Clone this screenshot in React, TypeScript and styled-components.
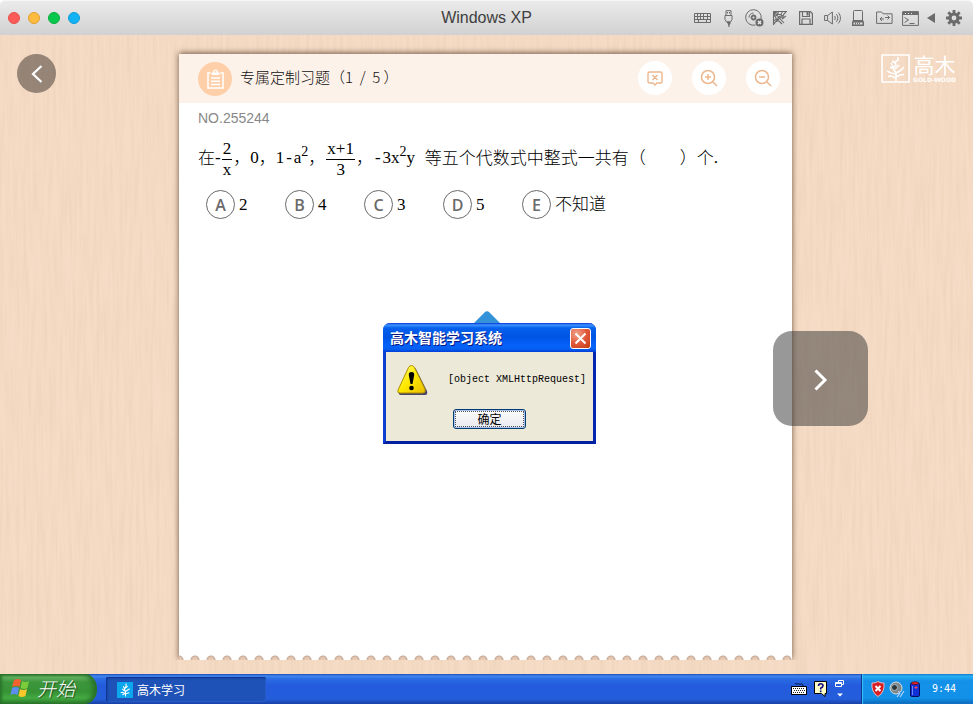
import React from "react";
import styled, { createGlobalStyle } from "styled-components";

const CJK = '"Noto Sans CJK SC", sans-serif';

const GlobalStyle = createGlobalStyle`
  *, *::before, *::after { box-sizing: border-box; }
  body { margin: 0; background: #fff; font-family: "Liberation Sans", ${CJK}; }
  button { font: inherit; padding: 0; border: 0; background: none; color: inherit; cursor: pointer; }
  svg { display: block; flex: none; }
`;

const Window = styled.div`
  display: grid;
  grid-template-rows: 35px 1fr 30px;
  min-height: 100vh;
`;

/* ---------- title bar ---------- */

const TitleBar = styled.header`
  display: grid;
  grid-template-columns: 1fr auto 1fr;
  align-items: center;
  border-radius: 5px 5px 0 0;
  border-top: 1px solid #f6f6f6;
  background: linear-gradient(#ebebeb, #d1d1d1);
`;

const Lights = styled.div`
  display: flex;
  gap: 8px;
  padding-left: 8px;
`;

const Light = styled.button<{ $fill: string; $ring: string }>`
  width: 12px;
  height: 12px;
  border-radius: 50%;
  border: 1px solid ${(p) => p.$ring};
  background: ${(p) => p.$fill};
`;

const WindowTitle = styled.h1`
  margin: 0;
  font: 400 16px/20px "Liberation Sans", sans-serif;
  color: #404040;
`;

const Tools = styled.div`
  display: flex;
  justify-content: flex-end;
  padding-right: 4px;
  color: #6b6b6b;
`;

const Tool = styled.button<{ $width?: number }>`
  display: grid;
  place-items: center;
  width: ${(p) => p.$width ?? 26}px;
  height: 20px;
`;

/* ---------- desktop ---------- */

const Desktop = styled.main`
  position: relative;
  display: grid;
  grid-template-columns: 179px 1fr 181px;
  padding: 19px 0 14px;
  background: #f6dcc6;
  isolation: isolate;
  overflow: hidden;
`;

const Grain = styled.svg`
  position: absolute;
  inset: 0;
  width: 100%;
  height: 100%;
  z-index: -1;
`;

const BackButton = styled.button`
  display: grid;
  place-items: center;
  width: 39px;
  height: 39px;
  margin-left: 17px;
  border-radius: 50%;
  background: rgba(72, 64, 56, 0.55);
`;

const Brand = styled.div`
  display: flex;
  justify-self: end;
  align-self: start;
  gap: 3px;
  padding-right: 17px;
  color: #fff;
`;

const BrandWords = styled.div`
  display: flex;
  flex-direction: column;
  align-items: center;
  gap: 2px;
`;

const BrandName = styled.span`
  font: 400 21px/20px ${CJK};
`;

const BrandSub = styled.span`
  font: 700 6px/7px "DejaVu Sans", sans-serif;
`;

const NextButton = styled.button`
  position: absolute;
  top: 296px;
  right: 105px;
  display: grid;
  place-items: center;
  width: 95px;
  height: 95px;
  padding-top: 3px;
  border-radius: 19px;
  background: rgba(50, 50, 50, 0.5);
`;

/* ---------- paper ---------- */

const Paper = styled.section`
  display: grid;
  grid-template-rows: 49px 1fr 5px;
  box-shadow: 0 -1px 6px rgba(80, 55, 35, 0.8);
  clip-path: inset(-12px -12px 0);
`;

const PaperHead = styled.header`
  display: flex;
  align-items: center;
  padding: 0 12px 0 19px;
  background: #fdf2e9;
`;

const HeadBadge = styled.span`
  display: grid;
  place-items: center;
  width: 34px;
  height: 34px;
  border-radius: 50%;
  background: #fecfa8;
`;

const HeadTitle = styled.h2`
  display: flex;
  margin: 0 auto 0 8px;
  padding-bottom: 3px;
  font: 300 15px/22px ${CJK};
  color: #111;
  white-space: pre;
`;

const HeadActions = styled.div`
  display: flex;
  gap: 20px;
  padding-bottom: 1px;
  color: #ecb78e;
`;

const RoundButton = styled.button`
  display: grid;
  place-items: center;
  width: 34px;
  height: 34px;
  border-radius: 50%;
  background: #fff;
`;

const PaperBody = styled.div`
  padding: 0 19px;
  background: #fff;
`;

const PaperTear = styled.div`
  background: radial-gradient(circle 5px at 8px 100%, #ecd0ba 0, #e0c2ac 3px, #c4a995 4px, #fff 5px) -8px 0 / 16px 5px;
`;

const Serial = styled.p`
  margin: 0;
  font-size: 14px;
  line-height: 30px;
  color: #888;
`;

const Question = styled.p`
  display: flex;
  align-items: center;
  margin: 0;
  height: 50px;
  font: 400 17px/20px "Liberation Serif", ${CJK};
  color: #000;
  white-space: pre;
`;

const Han = styled.span`
  padding-bottom: 2px;
  font: 300 17px/20px ${CJK};
`;

const Minus = styled.span`
  font: 400 16px/20px "Liberation Mono", monospace;
`;

const Power = styled.sup`
  font-size: 14px;
  line-height: 1px;
`;

const Fraction = styled.span`
  display: inline-flex;
  flex-direction: column;
  align-items: center;
  margin: 0 1px;
  padding-top: 3px;

  & > span:first-child {
    padding: 0 1px;
    border-bottom: 1px solid #000;
  }
`;

const Options = styled.div`
  display: grid;
  grid-template-columns: repeat(4, 79px) auto;
  justify-content: start;
  margin-top: 7px;
  padding-left: 8px;
`;

const Option = styled.button`
  display: flex;
  align-items: center;
  gap: 4px;
  font: 300 17px/20px "Liberation Serif", ${CJK};
  color: #000;
`;

const Letter = styled.span`
  display: grid;
  place-items: center;
  width: 29px;
  height: 29px;
  border: 1px solid #6a6a6a;
  border-radius: 50%;
  font: 600 16px/20px "Open Sans", sans-serif;
  color: #6a6a6a;
`;

/* ---------- alert ---------- */

const AlertLayer = styled.div`
  position: absolute;
  inset: 0;
  display: grid;
  place-items: center;
  padding: 45px 0 0 6px;
  pointer-events: none;
`;

const AlertStack = styled.div`
  display: grid;
  pointer-events: auto;
`;

const Pointer = styled.svg`
  margin-left: 91px;
`;

const Alert = styled.section`
  width: 213px;
  border: 3px solid #0a3fd0;
  border-top: 0;
  border-right-color: #0426ae;
  border-bottom-color: #0220a0;
  border-radius: 7px 7px 0 0;
  background: #ece9d8;
`;

const AlertBar = styled.header`
  display: flex;
  align-items: center;
  justify-content: space-between;
  height: 29px;
  margin: 0 -3px;
  padding: 2px 5px 0 7px;
  border-radius: 7px 7px 0 0;
  background: linear-gradient(#0831d9 0, #3d95ff 2px, #0560ed 5px, #0054e3 14px, #0661fa 22px, #0560f0 26px, #003dd7 29px);
`;

const AlertTitle = styled.h3`
  margin: 0;
  padding-bottom: 2px;
  font: 700 14px/20px ${CJK};
  color: #fff;
  text-shadow: 1px 1px #0a1883;
`;

const CloseButton = styled.button`
  display: grid;
  place-items: center;
  width: 21px;
  height: 21px;
  border: 1px solid #fff;
  border-radius: 3px;
  background: radial-gradient(circle at 30% 25%, #f0a48c, #e2593a 50%, #c03a14);
`;

const AlertBody = styled.div`
  display: flex;
  align-items: center;
  gap: 20px;
  padding: 12px 0 0 10px;
`;

const AlertText = styled.p`
  margin: 0;
  font: 400 10px/14px "Liberation Mono", monospace;
  color: #000;
  white-space: nowrap;
`;

const AlertActions = styled.div`
  display: flex;
  padding: 13px 0 12px 67px;
`;

const OkButton = styled.button`
  width: 73px;
  height: 20px;
  padding: 2px;
  border: 1px solid #003c74;
  border-radius: 3px;
  background: linear-gradient(#fdfdfb, #e8e8f0);
  box-shadow: inset 0 0 0 1px #a9c3ee;

  & > span {
    display: block;
    outline: 1px dotted #555;
    font: 400 12px/14px ${CJK};
    color: #000;
  }
`;

/* ---------- task bar ---------- */

const TaskBar = styled.footer`
  display: flex;
  background: linear-gradient(#1d49b3 0, #3f87ee 2px, #2a6be4 5px, #235bdc 12px, #245edb 25px, #1941a5 30px);
  color: #fff;
`;

const StartButton = styled.button`
  display: flex;
  align-items: center;
  gap: 6px;
  width: 97px;
  padding: 0 0 3px 10px;
  border-radius: 0 12px 12px 0 / 0 15px 15px 0;
  background: linear-gradient(#2c7a2c 0, #66b465 3px, #3d963c 8px, #379336 18px, #45ab42 24px, #2d7c2c 30px);
  box-shadow: inset -4px 0 5px #276f2a, inset 2px 0 3px #2a762c;
  font: italic 300 19px/24px ${CJK};
  text-shadow: 1px 1px 1px #1c471c;
`;

const TaskButton = styled.button`
  display: flex;
  align-items: center;
  gap: 4px;
  width: 160px;
  height: 25px;
  margin: 3px 0 0 9px;
  padding-left: 11px;
  border-radius: 2px;
  background: #1e52b7;
  box-shadow: inset 1px 1px 2px #0c2f82, inset -1px -1px 1px #2a60ca;
  font: 400 12px/18px ${CJK};
`;

const LangBar = styled.div`
  display: flex;
  align-items: center;
  gap: 7px;
  margin-left: auto;
  padding-right: 16px;
`;

const Tray = styled.div`
  display: flex;
  align-items: center;
  gap: 3px;
  width: 112px;
  padding-left: 9px;
  border-left: 1px solid #0c3a8c;
  background: linear-gradient(#0d6fc6 0, #28b0f2 2px, #1490e8 7px, #1291e9 24px, #0d66b8 30px);
  box-shadow: inset 1px 0 1px #3cc0ff;
`;

const Clock = styled.time`
  margin-left: 8px;
  font: 400 10px/14px "DejaVu Sans Mono", monospace;
`;

/* ---------- drawings ---------- */

const Sprig = ({ size, stroke = 1.3 }: { size: number; stroke?: number }) => (
  <svg width={size} height={size} viewBox="0 0 28 28" fill="none" stroke="#fff" strokeWidth={stroke}>
    <path d="M14 27v-9l-2-5 3-5V3M14 22l-6-3M14 22l7-2M13 17l-5-4M14 18l5-4 3-1M12 12l-2-4M13 12l5-4M8 19l-3 1M8 24l6-3" />
  </svg>
);

const BrandMark = () => (
  <svg width="29" height="29" viewBox="0 0 29 29" fill="none" stroke="#fff" strokeWidth="1.6">
    <path d="M1 1h27v27H1z" />
    <path d="M15 28v-9l-3-5 3-3-1-3 3-2V3M15 24l-5-2-3 .5M15 23l4-2 4-.5M15 20l-5-1-4-2M15 19l4-2 4-4M13 15l-4-2M14 15l4-4M14 9l-3-2M12 13l-2-4" />
  </svg>
);

const line = { fill: "none", stroke: "currentColor" } as const;

const toolIcons: { name: string; width?: number; icon: React.ReactNode }[] = [
  {
    name: "Keyboard",
    icon: (
      <svg width="17" height="12" viewBox="0 0 17 12" {...line}>
        <path d="M.5 1.500h16v9H.5zM.5 4.500h16M.5 7.500h16M3.500 1.500v6M6.500 1.500v6M9.500 1.500v6M13.500 1.500v6M4.500 7.500v3M12.500 7.500v3" />
      </svg>
    ),
  },
  {
    name: "USB",
    icon: (
      <svg width="9" height="17" viewBox="0 0 9 17" {...line}>
        <path d="M2 5.500V.7h5v4.800M1 5.500h7v4L6.500 12h-4L1 9.500zM3.500 2v1.500M5.500 2v1.500" />
        <path d="M3 12h3v2l-1 .5V17" fill="currentColor" />
      </svg>
    ),
  },
  {
    name: "Optical disc",
    icon: (
      <svg width="19" height="18" viewBox="0 0 19 18" {...line}>
        <path d="M10.500 16a7.800 7.800 0 1 1 5.600-6" />
        <circle cx="8.500" cy="8.500" r="2" strokeWidth="1.800" />
        <path d="M4 8.500A4.500 4.500 0 0 1 8.500 4" />
        <circle cx="14.500" cy="13.500" r="4" fill="currentColor" stroke="none" />
        <path d="m13 12 3 3m0-3-3 3" stroke="#eee" strokeWidth="1.300" />
      </svg>
    ),
  },
  {
    name: "Network",
    icon: (
      <svg width="16" height="16" viewBox="0 0 16 16" {...line} strokeWidth="1.100">
        <path d="M1.500 15V1.500H15M1.500 1.500 12 13M1.500 1.500 5 11M1.500 1.500 12 6M1.500 6q4 1 5-4.500M1.500 11q2-2 4-1 0-4 4-4-1-2 1-4.500M2 14q1-3 4-3 1-4 5-4 0-3 3-5M10 9l4-3M7 11l3 3" />
      </svg>
    ),
  },
  {
    name: "Floppy",
    icon: (
      <svg width="14" height="14" viewBox="0 0 14 14" {...line}>
        <path d="M.6.6h10.800l2 2v10.800H.6zM3.500.6v4.900h7V.6M3 13.400V8h8v5.400" strokeWidth="1.200" />
        <path d="M7.500 1h2v3.500h-2z" fill="currentColor" stroke="none" />
      </svg>
    ),
  },
  {
    name: "Sound",
    icon: (
      <svg width="17" height="14" viewBox="0 0 17 14" {...line}>
        <path d="M.6 4.500h3L8.400 1v12L3.600 9.500h-3zM3.600 4.500v5M10.500 5c1 1 1 3 0 4M12.300 3.200c2 2 2 5.600 0 7.600M14.200 1.500c3 3 3 8 0 11" />
      </svg>
    ),
  },
  {
    name: "Devices",
    icon: (
      <svg width="12" height="16" viewBox="0 0 12 16" {...line}>
        <path d="M1.500 1.500q0-1 1-1h7q1 0 1 1v9h-9z" />
        <path d="M1 10h10l1 2v4H0v-4z" fill="currentColor" stroke="none" />
        <path d="M1.500 12.500h9v2h-9z" fill="#ddd" stroke="none" />
        <path d="M3.500 12.500v2M5.500 12.500v2M7.500 12.500v2" />
      </svg>
    ),
  },
  {
    name: "Shared folders",
    icon: (
      <svg width="17" height="14" viewBox="0 0 17 14" {...line}>
        <path d="M.6 12.400V1h5l1.500 1.800h9v9.600zM4 8h4M6 6 4 8l2 2M9 6.500h4.500M11.500 4.500l2 2-2 2" />
      </svg>
    ),
  },
  {
    name: "Console",
    icon: (
      <svg width="17" height="15" viewBox="0 0 17 15" {...line}>
        <path d="M.6.6h15.800v13.800H.6z" />
        <path d="M1 1h15v3H1z" fill="currentColor" stroke="none" />
        <path d="M3 2.500h1M6 2.500h1M9 2.500h1" stroke="#eee" />
        <path d="m2.500 6.500 4 2.500-4 2.500M7.500 12.500h5" />
      </svg>
    ),
  },
  {
    name: "Collapse",
    width: 16,
    icon: (
      <svg width="8" height="10" viewBox="0 0 8 10" fill="currentColor">
        <path d="M0 5 8 0v10z" />
      </svg>
    ),
  },
  {
    name: "Settings",
    width: 30,
    icon: (
      <svg width="16" height="16" viewBox="0 0 16 16" {...line}>
        <circle cx="8" cy="8" r="4" strokeWidth="3.200" />
        <path
          d="M8 0v3M8 13v3M0 8h3M13 8h3M2.300 2.300l2.200 2.200M11.500 11.500l2.200 2.200M2.300 13.700l2.200-2.200M11.500 4.500l2.200-2.200"
          strokeWidth="2.800"
        />
      </svg>
    ),
  },
];

const Clipboard = () => (
  <svg width="17" height="20" viewBox="0 0 17 20" fill="none" stroke="#fff" strokeWidth="1.500">
    <path d="M3.500 4H1v15h15V4h-2.500M4 9h9M4 12.200h9M4 15.400h9" />
    <path d="M4.500 6V3.500H6q0-3 2.500-3T11 3.500h1.500V6z" fill="#fff" stroke="none" />
    <circle cx="8.500" cy="2.800" r="1" fill="#fecfa8" stroke="none" />
  </svg>
);

const Chevron = ({ back = false }: { back?: boolean }) => (
  <svg width="14" height="22" viewBox="0 0 14 22" fill="none" stroke="#fff" strokeWidth={back ? 2.2 : 3}>
    <path d={back ? "m11.500 3-8.500 8 8.500 8" : "m1.500 1.500 9.500 9.500-9.500 9.500"} />
  </svg>
);

const Magnifier = ({ plus = false }: { plus?: boolean }) => (
  <svg width="18" height="18" viewBox="0 0 18 18" fill="none" stroke="currentColor" strokeWidth="1.500">
    <circle cx="8" cy="8" r="6.500" />
    <path d={plus ? "m13 13 4 4M5 8h6M8 5v6" : "m13 13 4 4M5 8h6"} />
  </svg>
);

const ReportIcon = () => (
  <svg width="16" height="16" viewBox="0 0 16 16" fill="none" stroke="currentColor" strokeWidth="1.400">
    <path d="M2.500 2h11q1.500 0 1.500 1.500v8q0 1.500-1.500 1.500H10l-2 2-2-2H2.500Q1 13 1 11.500v-8Q1 2 2.500 2zM5.500 5l5 5m0-5-5 5" />
  </svg>
);

const WarningIcon = () => (
  <svg width="32" height="32" viewBox="0 0 32 32">
    <defs>
      <linearGradient id="warn" x1="0" y1="0" x2="1" y2="1">
        <stop offset="0" stopColor="#ffff80" />
        <stop offset=".5" stopColor="#ffe800" />
        <stop offset="1" stopColor="#e8bc00" />
      </linearGradient>
    </defs>
    <path d="M17 3q2 0 3 2l11 22q1 4-2 4H5q-3 0-2-3L14 5q1-2 3-2z" fill="#4a4568" />
    <path d="M15.500 1.500q2 0 3 2L29 25q1 4-2 4H4q-3 0-2-3L12.500 3.500q1-2 3-2z" fill="url(#warn)" stroke="#b09000" />
    <path d="M15.500 8q3 0 2.700 3l-1.700 9h-2l-1.700-9q-.3-3 2.700-3z" />
    <circle cx="15.500" cy="24" r="2.300" />
  </svg>
);

const FlagIcon = () => (
  <svg width="21" height="20" viewBox="0 0 21 20">
    <path d="M4 2q4-2 7 0L9.500 9q-3-2-7.500 0z" fill="#f2622f" />
    <path d="M12 3q3 2 7 0l-1.500 7q-4 2-7 0z" fill="#7ccb3a" />
    <path d="M2 10q4-2 7 0l-1.500 7q-3-2-7 0z" fill="#5d8df0" />
    <path d="M10 11q3 2 7 0l-1.500 7q-4 2-7 0z" fill="#fbc82c" />
  </svg>
);

const TaskTile = styled.span`
  display: grid;
  place-items: center;
  width: 16px;
  height: 16px;
  background: #0aa6ee;
`;

const BarKeyboard = () => (
  <svg width="16" height="14" viewBox="0 0 16 14">
    <path d="M4 1q1 2 2 1t2 0 2 0 2 1v2" fill="none" stroke="#081848" />
    <rect y="4" width="16" height="9" rx="1" fill="#000" />
    <rect x="1" y="5" width="14" height="7" fill="#fff" />
    <path d="M2 6.500h12M3 8.500h11M2 10.500h12" stroke="#222" strokeDasharray="1 1" />
  </svg>
);

const BarHelp = () => (
  <svg width="14" height="16" viewBox="0 0 14 16">
    <path d="M.5.5h12v12H11v3L7.500 12.500h-7z" fill="#ffffc8" stroke="#000" />
    <path d="M4.500 5q0-2.300 2.200-2.300T9 4.800q0 1.300-2.300 2.400v1.300M6.700 9.500v1.700" fill="none" stroke="#0a0a80" strokeWidth="1.600" />
  </svg>
);

const BarRestore = () => (
  <svg width="10" height="18" viewBox="0 0 10 18" fill="none" stroke="#fff">
    <path d="M3.500 3V.5h5v4H7M.5 2.500h6v4h-6zM.5 3.500h6" />
    <path d="M2 13.500h6l-3 3z" fill="#fff" stroke="none" />
  </svg>
);

const ShieldIcon = () => (
  <svg width="14" height="16" viewBox="0 0 14 16">
    <path d="M7 .5q3 2 6 1.500 1 9-6 13.500Q0 11 1 2q3 .5 6-1.500z" fill="#d81c24" stroke="#e8b8b8" />
    <path d="m4.500 5 5 5m0-5-5 5" stroke="#fff" strokeWidth="2" />
  </svg>
);

const SpeakerIcon = () => (
  <svg width="18" height="17" viewBox="0 0 18 17">
    <circle cx="8" cy="7" r="6" fill="#7d868b" stroke="#d9dedf" />
    <circle cx="6.500" cy="6.500" r="3" fill="#2d363b" stroke="#b4bdbf" />
    <path d="m9 16 3-4M12 16l4-6M11.500 12l-1-2" stroke="#b6d4ff" strokeWidth="1.200" />
  </svg>
);

const BatteryIcon = () => (
  <svg width="12" height="16" viewBox="0 0 12 16">
    <rect x="1.500" y="2" width="9" height="13.500" rx="1.500" fill="#1230d8" stroke="#060c58" />
    <ellipse cx="6" cy="2.200" rx="3.500" ry="1.400" fill="#e02830" stroke="#400" strokeWidth=".6" />
    <path d="M3.500 5v9" stroke="#6688ff" />
    <path d="M5.500 6.500h3M7 5v3" stroke="#ff4650" />
  </svg>
);

const choices = [
  { letter: "A", text: "2" },
  { letter: "B", text: "4" },
  { letter: "C", text: "3" },
  { letter: "D", text: "5" },
  { letter: "E", text: "不知道" },
];

const lights = [
  { name: "Close", fill: "#fc5b57", ring: "#e8504c" },
  { name: "Minimize", fill: "#fdbc40", ring: "#e0a030" },
  { name: "Zoom", fill: "#06c84d", ring: "#08ae3a" },
  { name: "Coherence", fill: "#12b2f4", ring: "#109edb" },
];

export default function App() {
  return (
    <Window>
      <GlobalStyle />
      <TitleBar>
        <Lights>
          {lights.map((l) => (
            <Light key={l.name} aria-label={l.name} $fill={l.fill} $ring={l.ring} />
          ))}
        </Lights>
        <WindowTitle>Windows XP</WindowTitle>
        <Tools>
          {toolIcons.map((t) => (
            <Tool key={t.name} aria-label={t.name} $width={t.width}>
              {t.icon}
            </Tool>
          ))}
        </Tools>
      </TitleBar>

      <Desktop>
        <Grain aria-hidden="true">
          <filter id="grain" x="0" y="0" width="100%" height="100%">
            <feTurbulence type="fractalNoise" baseFrequency="0.3 0.015" numOctaves="3" seed="7" />
            <feColorMatrix values="0 0 0 0 .76  0 0 0 0 .55  0 0 0 0 .40  .55 0 0 0 -.17" />
          </filter>
          <rect width="100%" height="100%" filter="url(#grain)" />
        </Grain>

        <BackButton aria-label="上一题">
          <Chevron back />
        </BackButton>

        <Paper>
          <PaperHead>
            <HeadBadge>
              <Clipboard />
            </HeadBadge>
            <HeadTitle>专属定制习题（1  /  5 ）</HeadTitle>
            <HeadActions>
              <RoundButton aria-label="报错">
                <ReportIcon />
              </RoundButton>
              <RoundButton aria-label="放大">
                <Magnifier plus />
              </RoundButton>
              <RoundButton aria-label="缩小">
                <Magnifier />
              </RoundButton>
            </HeadActions>
          </PaperHead>
          <PaperBody>
            <Serial>NO.255244</Serial>
            <Question>
              <Han>在</Han>
              <span>-</span>
              <Fraction>
                <span>2</span>
                <span>x</span>
              </Fraction>
              <Han>，</Han>
              <span>0</span>
              <Han>，</Han>
              <span>
                1<Minus>-</Minus>a<Power>2</Power>
              </span>
              <Han>，</Han>
              <Fraction>
                <span>x+1</span>
                <span>3</span>
              </Fraction>
              <Han>，</Han>
              <span>
                <Minus>-</Minus>3x<Power>2</Power>y<Minus> </Minus>
              </span>
              <Han>等五个代数式中整式一共有（　　）个</Han>
              <span>.</span>
            </Question>
            <Options>
              {choices.map((c) => (
                <Option key={c.letter}>
                  <Letter>{c.letter}</Letter>
                  <span>{c.text}</span>
                </Option>
              ))}
            </Options>
          </PaperBody>
          <PaperTear />
        </Paper>

        <Brand>
          <BrandMark />
          <BrandWords>
            <BrandName>高木</BrandName>
            <BrandSub>GOLD-WOOD</BrandSub>
          </BrandWords>
        </Brand>

        <NextButton aria-label="下一题">
          <Chevron />
        </NextButton>

        <AlertLayer>
          <AlertStack>
            <Pointer width="26" height="12" viewBox="0 0 26 12">
              <path d="M0 12 10.500 1.500q2.500-2.500 5 0L26 12z" fill="#3492d8" />
            </Pointer>
            <Alert role="alertdialog" aria-labelledby="alert-title">
              <AlertBar>
                <AlertTitle id="alert-title">高木智能学习系统</AlertTitle>
                <CloseButton aria-label="关闭">
                  <svg width="13" height="13" viewBox="0 0 13 13" stroke="#fff" strokeWidth="2">
                    <path d="m1.500 1.500 10 10m0-10-10 10" />
                  </svg>
                </CloseButton>
              </AlertBar>
              <AlertBody>
                <WarningIcon />
                <AlertText>[object XMLHttpRequest]</AlertText>
              </AlertBody>
              <AlertActions>
                <OkButton>
                  <span>确定</span>
                </OkButton>
              </AlertActions>
            </Alert>
          </AlertStack>
        </AlertLayer>
      </Desktop>

      <TaskBar>
        <StartButton>
          <FlagIcon />
          开始
        </StartButton>
        <TaskButton>
          <TaskTile>
            <Sprig size={15} stroke={2} />
          </TaskTile>
          高木学习
        </TaskButton>
        <LangBar>
          <BarKeyboard />
          <BarHelp />
          <BarRestore />
        </LangBar>
        <Tray>
          <ShieldIcon />
          <SpeakerIcon />
          <BatteryIcon />
          <Clock>9:44</Clock>
        </Tray>
      </TaskBar>
    </Window>
  );
}
